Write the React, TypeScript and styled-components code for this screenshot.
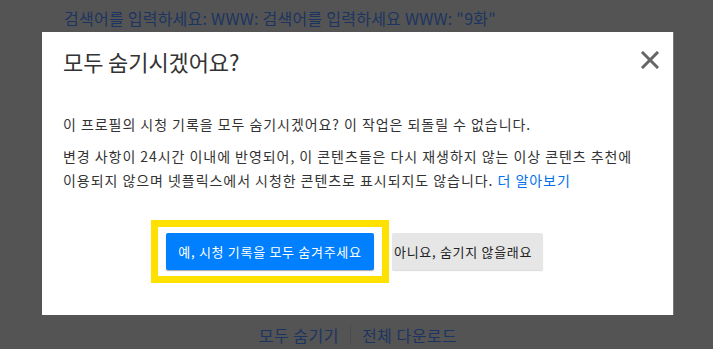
import React from "react";
import styled, { createGlobalStyle } from "styled-components";

const GlobalStyle = createGlobalStyle`
  html, body {
    margin: 0;
    padding: 0;
    background-color: #545454;
  }
  body {
    font-family: "Noto Sans CJK KR", "Noto Sans", sans-serif;
  }
`;

const Page = styled.div`
  width: 713px;
  height: 349px;
  overflow: hidden;
  display: flex;
  flex-direction: column;
  background-color: #545454;
`;

const SearchLine = styled.div`
  height: 32px;
  padding-left: 64px;
  font-size: 16px;
  line-height: 36px;
  letter-spacing: 0.25px;
  color: #1c3461;
  white-space: nowrap;
  box-sizing: border-box;
`;

const Modal = styled.div`
  margin-left: 42px;
  width: 632px;
  height: 283px;
  box-sizing: border-box;
  padding: 14px 14px 0 21px;
  background-color: #ffffff;
  border-right: 1px solid #777;
  color: #333333;
`;

const ModalHeader = styled.div`
  display: flex;
  justify-content: space-between;
  align-items: flex-start;

  h2 {
    margin: 0;
    font-size: 22px;
    font-weight: 400;
    line-height: 30px;
    letter-spacing: -0.1px;
    color: #333333;
  }
`;

const CloseButton = styled.button`
  margin-top: 5px;
  width: 18px;
  height: 18px;
  padding: 0;
  border: none;
  background: none;
  cursor: pointer;
  display: flex;
`;

const Body = styled.div`
  margin-top: 36px;
  font-size: 14px;
  line-height: 24px;
  letter-spacing: 0.95px;
  white-space: nowrap;

  p {
    margin: 0 0 8px 0;
  }

  a {
    color: #0071eb;
    text-decoration: none;
  }
`;

const Actions = styled.div`
  display: flex;
  align-items: center;
  margin-top: 28px;
  margin-left: 88px;
`;

const Highlight = styled.div`
  display: flex;
  padding: 6px 8px;
  border: 7px solid #ffe100;
  background-color: #ffffff;
`;

const ActionButton = styled.button<{ $primary?: boolean }>`
  height: 37px;
  border: none;
  border-radius: 2px;
  font-family: "Noto Sans CJK KR", "Noto Sans", sans-serif;
  font-size: 13px;
  letter-spacing: 0.7px;
  cursor: pointer;
  white-space: nowrap;
  width: ${(p) => (p.$primary ? "208px" : "151px")};
  padding: ${(p) => (p.$primary ? "0 12px" : "0 12px 0 2px")};
  margin-left: ${(p) => (p.$primary ? "0" : "3px")};
  text-align: ${(p) => (p.$primary ? "center" : "right")};
  color: ${(p) => (p.$primary ? "#ffffff" : "#222222")};
  background-color: ${(p) => (p.$primary ? "#0080ff" : "#e6e6e6")};
  box-shadow: ${(p) =>
    p.$primary ? "0 1px 1px rgba(0, 0, 0, 0.35)" : "0 1px 1px rgba(0, 0, 0, 0.15)"};
`;

const Footer = styled.div`
  display: flex;
  justify-content: center;
  align-items: center;
  padding-top: 8px;
  padding-left: 3px;
  font-size: 16px;
  letter-spacing: 0.5px;
  color: #1c3461;
`;

const Divider = styled.span`
  width: 1px;
  height: 20px;
  margin: 0 11px;
  background-color: #4a4a4a;
`;

const CloseIcon = () => (
  <svg width="18" height="18" viewBox="0 0 18 18">
    <path
      d="M2 2 L16 16 M16 2 L2 16"
      stroke="#666666"
      strokeWidth="3"
      strokeLinecap="square"
    />
  </svg>
);

const App = () => {
  return (
    <Page>
      <GlobalStyle />
      <SearchLine>
        검색어를 입력하세요: WWW: 검색어를 입력하세요 WWW: "9화"
      </SearchLine>
      <Modal>
        <ModalHeader>
          <h2>모두 숨기시겠어요?</h2>
          <CloseButton aria-label="닫기">
            <CloseIcon />
          </CloseButton>
        </ModalHeader>
        <Body>
          <p>이 프로필의 시청 기록을 모두 숨기시겠어요? 이 작업은 되돌릴 수 없습니다.</p>
          <p>
            변경 사항이 24시간 이내에 반영되어, 이 콘텐츠들은 다시 재생하지 않는 이상 콘텐츠 추천에
            <br />
            이용되지 않으며 넷플릭스에서 시청한 콘텐츠로 표시되지도 않습니다.{" "}
            <a href="#">더 알아보기</a>
          </p>
        </Body>
        <Actions>
          <Highlight>
            <ActionButton $primary>예, 시청 기록을 모두 숨겨주세요</ActionButton>
          </Highlight>
          <ActionButton>아니요, 숨기지 않을래요</ActionButton>
        </Actions>
      </Modal>
      <Footer>
        <span>모두 숨기기</span>
        <Divider />
        <span>전체 다운로드</span>
      </Footer>
    </Page>
  );
};

export default App;
